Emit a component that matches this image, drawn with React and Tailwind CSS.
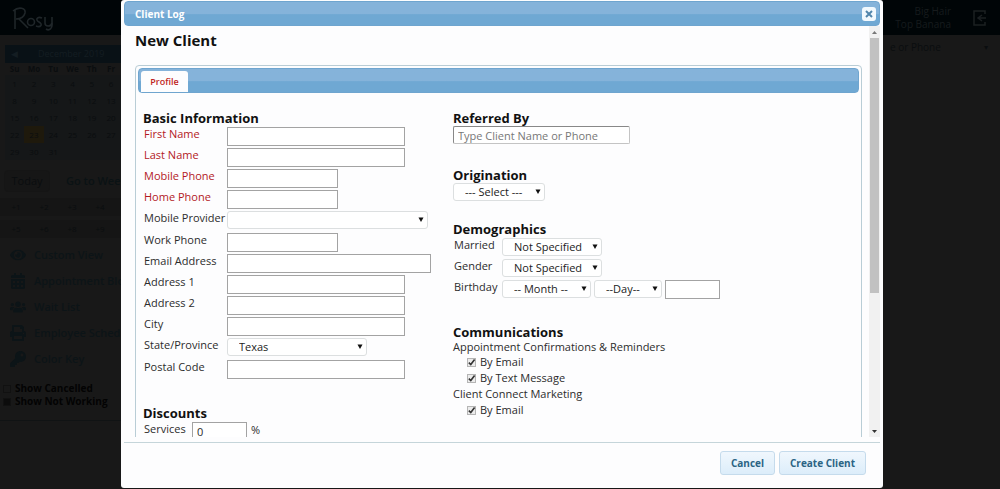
import React from "react";
import { FaEye, FaCalendarAlt, FaUsers, FaPrint, FaKey } from "react-icons/fa";

const weeks = [
  [1, 2, 3, 4, 5, 6, 7],
  [8, 9, 10, 11, 12, 13, 14],
  [15, 16, 17, 18, 19, 20, 21],
  [22, 23, 24, 25, 26, 27, 28],
  [29, 30, 31, "", "", "", ""],
];

const links = [
  [FaEye, "Custom View"],
  [FaCalendarAlt, "Appointment Blocks"],
  [FaUsers, "Wait List"],
  [FaPrint, "Employee Schedule"],
  [FaKey, "Color Key"],
];

const basicFields = [
  { id: "first", label: "First Name", required: true, width: "w-[178px]" },
  { id: "last", label: "Last Name", required: true, width: "w-[178px]" },
  { id: "mobile", label: "Mobile Phone", required: true, width: "w-[111px]" },
  { id: "home", label: "Home Phone", required: true, width: "w-[111px]" },
  { id: "provider", label: "Mobile Provider", options: [""], width: "w-[201px]" },
  { id: "work", label: "Work Phone", width: "w-[111px]" },
  { id: "email", label: "Email Address", width: "w-[204px]" },
  { id: "address1", label: "Address 1", width: "w-[178px]" },
  { id: "address2", label: "Address 2", width: "w-[178px]" },
  { id: "city", label: "City", width: "w-[178px]" },
  { id: "state", label: "State/Province", options: ["Texas"], width: "w-[140px]" },
  { id: "postal", label: "Postal Code", width: "w-[178px]" },
];

function TextBox({ width, ...rest }) {
  return <input type="text" className={`h-[19px] border border-[#a3a3a3] bg-white px-1 text-[11px] ${width}`} {...rest} />;
}

function Select({ width, options, ...rest }) {
  return (
    <span className={`relative block ${width}`}>
      <select
        className="block h-[18px] w-full appearance-none rounded-[3px] border border-[#dcdfe0] bg-white pl-[11px] text-[11px] leading-4 text-[#222]"
        {...rest}
      >
        {options.map((o) => (
          <option key={o}>{o}</option>
        ))}
      </select>
      <svg className="pointer-events-none absolute right-1 top-1.5 h-[5px] w-[6px]" viewBox="0 0 6 5">
        <path d="M0.5 0.500h5L3 5z" fill="#111" />
      </svg>
    </span>
  );
}

function Check({ label }) {
  return (
    <label className="flex h-4 items-center gap-1 pl-[14px]">
      <span className="relative block size-[9px]">
        <input type="checkbox" defaultChecked className="peer block size-[9px] appearance-none border border-[#b5b5b5] bg-[#ececec]" />
        <svg className="pointer-events-none invisible absolute inset-0 size-[9px] peer-checked:visible" viewBox="0 0 9 9">
          <path d="M1.8 4.6l2 2L7.6 1.6" fill="none" stroke="#333" strokeWidth="1.6" />
        </svg>
      </span>
      {label}
    </label>
  );
}

function Heading({ children }) {
  return <h2 className="text-[13px] font-bold leading-4 text-[#111]">{children}</h2>;
}

function Backdrop() {
  return (
    <div className="flex min-h-screen flex-col bg-[#181818] text-[#0a0d0f]">
      <header className="flex h-[35px] items-center justify-between bg-[#000507] pl-3 pr-3 text-[#161b1d]">
        <svg className="h-[26px] w-[48px]" viewBox="0 0 48 26" fill="none" stroke="#1f2629" strokeWidth="1.6">
          <path d="M3 24V4M1 6C7 1 14 3 13 8c-1 4-5 6-9 6M7 14l9 9" />
          <circle cx="19" cy="17" r="3.5" />
          <path d="M30 13c-5-2-7 2-3 4s2 6-3 4M33 12v6c0 4 6 4 7 0v-6M40 17c1 7-3 9-6 7" />
        </svg>
        <div className="flex items-center gap-[21px]">
          <div className="text-right text-[10px] leading-[13px]">
            <div>Big Hair</div>
            <div>Top Banana</div>
          </div>
          <svg className="size-4" viewBox="0 0 16 16" fill="none" stroke="#1b2022" strokeWidth="1.5">
            <path d="M13 4V1H2v14h11v-3M6 8h8M10 5L6 8l4 3" />
          </svg>
        </div>
      </header>
      <div className="flex flex-1 justify-between">
        <aside className="w-[165px] pt-[10px]">
          <div className="ml-[5px] flex h-[18px] items-center gap-5 bg-[#091116] pl-[6px] text-[9px] text-[#141d22]">
            <span>◀</span>
            <span>December 2019</span>
          </div>
          <table className="ml-[5px] w-[135px] table-fixed text-center text-[8px] leading-[17px]">
            <thead>
              <tr className="leading-3">
                {["Su", "Mo", "Tu", "We", "Th", "Fr", "Sa"].map((d) => (
                  <th key={d} className="font-bold">{d}</th>
                ))}
              </tr>
            </thead>
            <tbody>
              {weeks.map((w, i) => (
                <tr key={i}>
                  {w.map((d, j) => (
                    <td key={j} className={d === 23 ? "bg-[#1e190c]" : "bg-[#151718]"}>{d}</td>
                  ))}
                </tr>
              ))}
            </tbody>
          </table>
          <div className="mt-1 flex h-[34px] items-center gap-1 text-[11px]">
            <button className="ml-1 h-[22px] w-[46px] rounded-sm border border-[#151515] bg-[#161616]">Today</button>
            <span className="pl-3 font-semibold text-[#0a1214]">Go to Week</span>
          </div>
          {[["+1", "+2", "+3", "+4"], ["+5", "+6", "+8", "+9"]].map((r) => (
            <div key={r[0]} className="mb-1 flex h-[18px] items-center bg-[#151515] pl-0.5 text-[8px]">
              {r.map((t) => (
                <span key={t} className="w-7 text-center">{t}</span>
              ))}
            </div>
          ))}
          <nav className="flex flex-col">
            {links.map(([Icon, text]) => (
              <a key={text} href="#" className="flex h-[26px] items-center gap-2 pl-[10px] text-[11px] font-semibold text-[#0c1417]">
                <Icon className="size-4" />
                <span className="whitespace-nowrap">{text}</span>
              </a>
            ))}
          </nav>
          <div className="mt-[10px] border-b border-[#101314] pb-3 text-[10px] font-bold leading-[13px] text-[#030303]">
            <label className="flex items-center gap-1 pl-[3px]">
              <input type="checkbox" className="size-2 appearance-none border border-[#111]" />
              Show Cancelled
            </label>
            <label className="flex items-center gap-1 pl-[3px]">
              <input type="checkbox" defaultChecked className="size-2 appearance-none border border-[#111] checked:bg-[#0c0c0c]" />
              Show Not Working
            </label>
          </div>
        </aside>
        <div className="flex h-6 w-[114px] items-center justify-between pr-3 text-[10px]">
          <span className="pl-1">e or Phone</span>
          <span className="text-[8px]">▾</span>
        </div>
      </div>
    </div>
  );
}

export default function App() {
  return (
    <div className="relative h-screen overflow-hidden font-['Open_Sans',sans-serif]">
      <Backdrop />
      <div className="absolute inset-0 flex pb-px pl-[121px] pr-[117px]">
        <section role="dialog" aria-label="Client Log" className="flex min-w-0 flex-1 flex-col rounded-[3px] bg-[#fdfdfe] text-[11px] leading-4 text-[#2c2c2c]">
          <div className="mx-[3px] mt-px flex h-[25px] shrink-0 items-center justify-between rounded-[4px] border border-[#6fa5cf] bg-linear-to-b from-[#85b3da] from-50% to-[#6fa8d3] to-55% pl-[10px] pr-[3px] text-white">
            <span className="text-[10px] font-bold">Client Log</span>
            <button aria-label="Close" className="flex size-[14px] items-center justify-center rounded-[3px] bg-[#f2f9fe]">
              <svg className="size-2" viewBox="0 0 8 8">
                <path d="M1 1l6 6M7 1L1 7" stroke="#5286ac" strokeWidth="2" />
              </svg>
            </button>
          </div>

          <div className="mr-[3px] flex min-h-0 flex-1">
            <div className="min-w-0 flex-1 overflow-hidden pl-[14px] pr-[7px]">
              <h1 className="mb-[13px] mt-[3px] text-[15px] font-bold leading-[23px] text-[#111]">New Client</h1>
              <div className="rounded-[4px] border border-[#b9cdd6] p-0.5">
                <div className="flex h-[25px] items-end rounded-[4px] border border-[#6fa5cf] bg-linear-to-b from-[#85b3da] from-50% to-[#6fa8d3] to-55% pl-[2px]">
                  <button className="h-[21px] w-[47px] rounded-t-[3px] bg-[#fdfdfe] text-[9px] font-semibold text-[#bf1f24]">Profile</button>
                </div>
                <div className="grid grid-cols-[310px_1fr] px-[5px] pt-[17px]">
                  <div>
                    <Heading>Basic Information</Heading>
                    <div className="pl-px">
                      {basicFields.map((f) => (
                        <div key={f.id} className={`flex items-start ${f.options ? "h-[22px]" : "h-[21px]"}`}>
                          <label htmlFor={f.id} className={`w-[83px] ${f.required ? "text-[#b3191f]" : ""}`}>{f.label}</label>
                          <div className="pt-px">
                            {f.options ? (
                              <Select id={f.id} width={f.width} options={f.options} />
                            ) : (
                              <TextBox id={f.id} width={f.width} />
                            )}
                          </div>
                        </div>
                      ))}
                    </div>
                    <div className="mt-[25px]">
                      <Heading>Discounts</Heading>
                    </div>
                    <div className="flex items-start pl-px">
                      <label htmlFor="services" className="w-12">Services</label>
                      <div className="flex items-start gap-1 pt-px">
                        <TextBox id="services" width="w-[55px]" defaultValue="0" />
                        <span>%</span>
                      </div>
                    </div>
                  </div>

                  <div className="flex flex-col">
                    <Heading>Referred By</Heading>
                    <input
                      type="text"
                      aria-label="Referred By"
                      placeholder="Type Client Name or Phone"
                      className="h-[18px] w-[177px] rounded-[2px] border border-[#c4c4c4] border-l-[#888] border-t-[#888] bg-white px-1 text-[11px] placeholder:text-[#777]"
                    />
                    <div className="mt-[23px]">
                      <Heading>Origination</Heading>
                      <Select aria-label="Origination" width="w-[92px]" options={["--- Select ---"]} />
                    </div>
                    <div className="mt-5">
                      <Heading>Demographics</Heading>
                      <div className="flex h-[21px] items-start pl-px">
                        <label htmlFor="married" className="w-12">Married</label>
                        <div className="pt-px"><Select id="married" width="w-[100px]" options={["Not Specified"]} /></div>
                      </div>
                      <div className="flex h-[21px] items-start pl-px">
                        <label htmlFor="gender" className="w-12">Gender</label>
                        <div className="pt-px"><Select id="gender" width="w-[100px]" options={["Not Specified"]} /></div>
                      </div>
                      <div className="flex h-[21px] items-start pl-px">
                        <label htmlFor="month" className="w-12">Birthday</label>
                        <div className="flex gap-[3px] pt-px">
                          <Select id="month" width="w-[89px]" options={["-- Month --"]} />
                          <Select aria-label="Day" width="w-[68px]" options={["--Day--"]} />
                          <TextBox aria-label="Year" width="w-[55px]" />
                        </div>
                      </div>
                    </div>
                    <div className="mt-6">
                      <Heading>Communications</Heading>
                      <div className="h-[14px] leading-[14px]">Appointment Confirmations &amp; Reminders</div>
                      <Check label="By Email" />
                      <Check label="By Text Message" />
                      <div>Client Connect Marketing</div>
                      <Check label="By Email" />
                    </div>
                  </div>
                </div>
              </div>
            </div>
            <div className="flex w-[11px] flex-col items-center justify-between bg-[#f1f1f1]">
              <svg className="h-3 w-full shrink-0" viewBox="0 0 11 12"><path d="M3 8l2.500-3L8 8z" fill="#777" /></svg>
              <div className="w-[9px] flex-1"><div className="h-[66%] bg-[#c1c1c1]" /></div>
              <svg className="h-3 w-full shrink-0" viewBox="0 0 11 12"><path d="M3 5h5L5.500 8z" fill="#333" /></svg>
            </div>
          </div>

          <footer className="mx-[3px] mt-[5px] flex h-[46px] shrink-0 justify-end gap-1 border-t border-[#c5d5da] pr-[14px] pt-2">
            <button className="h-[24px] rounded-[3px] border border-[#c5dbec] bg-linear-to-b from-[#f0f7fd] to-[#dcedfa] px-[10px] text-[10px] font-bold text-[#2b6484]">Cancel</button>
            <button className="h-[24px] rounded-[3px] border border-[#c5dbec] bg-linear-to-b from-[#f0f7fd] to-[#dcedfa] px-[10px] text-[10px] font-bold text-[#2b6484]">Create Client</button>
          </footer>
        </section>
      </div>
    </div>
  );
}
